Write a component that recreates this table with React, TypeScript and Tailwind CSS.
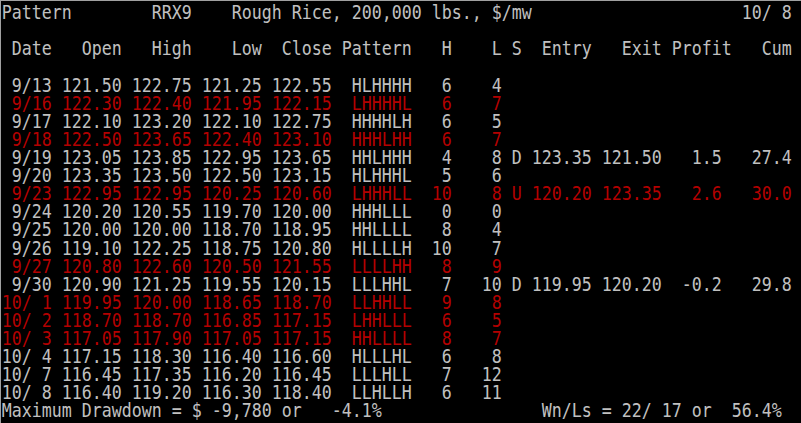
import React from "react";

type Trade = { s: string; entry: string; exit: string; profit: string; cum: string };

interface Row {
	d: string;
	o: string;
	h: string;
	l: string;
	c: string;
	p: string;
	hi: number;
	lo: number;
	red?: boolean;
	trade?: Trade;
}

const rows: Row[] = [
	{ d: "9/13", o: "121.50", h: "122.75", l: "121.25", c: "122.55", p: "HLHHHH", hi: 6, lo: 4 },
	{ d: "9/16", o: "122.30", h: "122.40", l: "121.95", c: "122.15", p: "LHHHHL", hi: 6, lo: 7, red: true },
	{ d: "9/17", o: "122.10", h: "123.20", l: "122.10", c: "122.75", p: "HHHHLH", hi: 6, lo: 5 },
	{ d: "9/18", o: "122.50", h: "123.65", l: "122.40", c: "123.10", p: "HHHLHH", hi: 6, lo: 7, red: true },
	{
		d: "9/19", o: "123.05", h: "123.85", l: "122.95", c: "123.65", p: "HHLHHH", hi: 4, lo: 8,
		trade: { s: "D", entry: "123.35", exit: "121.50", profit: "1.5", cum: "27.4" },
	},
	{ d: "9/20", o: "123.35", h: "123.50", l: "122.50", c: "123.15", p: "HLHHHL", hi: 5, lo: 6 },
	{
		d: "9/23", o: "122.95", h: "122.95", l: "120.25", c: "120.60", p: "LHHHLL", hi: 10, lo: 8, red: true,
		trade: { s: "U", entry: "120.20", exit: "123.35", profit: "2.6", cum: "30.0" },
	},
	{ d: "9/24", o: "120.20", h: "120.55", l: "119.70", c: "120.00", p: "HHHLLL", hi: 0, lo: 0 },
	{ d: "9/25", o: "120.00", h: "120.00", l: "118.70", c: "118.95", p: "HHLLLL", hi: 8, lo: 4 },
	{ d: "9/26", o: "119.10", h: "122.25", l: "118.75", c: "120.80", p: "HLLLLH", hi: 10, lo: 7 },
	{ d: "9/27", o: "120.80", h: "122.60", l: "120.50", c: "121.55", p: "LLLLHH", hi: 8, lo: 9, red: true },
	{
		d: "9/30", o: "120.90", h: "121.25", l: "119.55", c: "120.15", p: "LLLHHL", hi: 7, lo: 10,
		trade: { s: "D", entry: "119.95", exit: "120.20", profit: "-0.2", cum: "29.8" },
	},
	{ d: "10/ 1", o: "119.95", h: "120.00", l: "118.65", c: "118.70", p: "LLHHLL", hi: 9, lo: 8, red: true },
	{ d: "10/ 2", o: "118.70", h: "118.70", l: "116.85", c: "117.15", p: "LHHLLL", hi: 6, lo: 5, red: true },
	{ d: "10/ 3", o: "117.05", h: "117.90", l: "117.05", c: "117.15", p: "HHLLLL", hi: 8, lo: 7, red: true },
	{ d: "10/ 4", o: "117.15", h: "118.30", l: "116.40", c: "116.60", p: "HLLLHL", hi: 6, lo: 8 },
	{ d: "10/ 7", o: "116.45", h: "117.35", l: "116.20", c: "116.45", p: "LLLHLL", hi: 7, lo: 12 },
	{ d: "10/ 8", o: "116.40", h: "119.20", l: "116.30", c: "118.40", p: "LLHLLH", hi: 6, lo: 11 },
];

// fixed 80-column text lines, like the original screen
const formatRow = (r: Row) => {
	let line =
		r.d.padStart(5) + " " + r.o + " " + r.h + " " + r.l + " " + r.c + "  " + r.p +
		String(r.hi).padStart(4) + String(r.lo).padStart(5);
	if (r.trade) {
		const t = r.trade;
		line += " " + t.s + " " + t.entry + " " + t.exit + t.profit.padStart(6) + t.cum.padStart(7);
	}
	return line;
};

const title = "Pattern        RRX9    Rough Rice, 200,000 lbs., $/mw".padEnd(74) + "10/ 8";
const header =
	" Date" + "   Open" + "   High" + "    Low" + "  Close" + " Pattern" + "   H" + "    L" + " S" +
	"  Entry" + "   Exit" + " Profit" + "   Cum";
const footer = "Maximum Drawdown = $ -9,780 or   -4.1%".padEnd(54) + "Wn/Ls = 22/ 17 or  56.4%";

const Line = ({ text, red }: { text: string; red?: boolean }) => (
	<div className={`h-[18.1px] leading-[18.1px] whitespace-pre ${red ? "text-[#b40000]" : "text-[#c0c0c0]"}`}>
		{text || " "}
	</div>
);

const App = () => {
	return (
		<div className="w-[801px] h-[423px] bg-black border-t border-l border-[#a0a0a0] overflow-hidden">
			<div className="pt-[2.3px] pl-[1px] origin-top-left scale-x-[0.874] font-['DejaVu_Sans_Mono',monospace] text-[19px]">
				<Line text={title} />
				<Line text="" />
				<Line text={header} />
				<Line text="" />
				{rows.map((r) => (
					<Line key={r.d} text={formatRow(r)} red={r.red} />
				))}
				<Line text={footer} />
			</div>
		</div>
	);
};

export default App;
